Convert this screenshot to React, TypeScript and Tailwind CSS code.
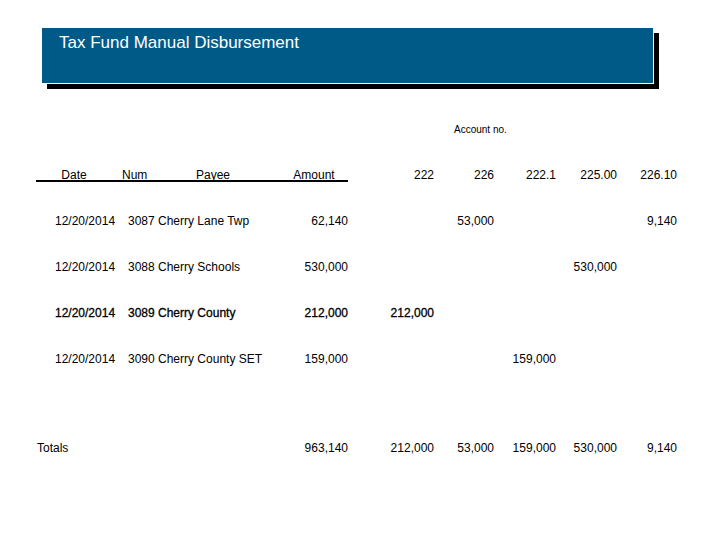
const cols = ['w-[84px]', 'w-[160px]', 'w-[68px]', 'w-[86px]', 'w-[60px]', 'w-[62px]', 'w-[61px]', 'w-[60px]']

const rows = [
  { date: '12/20/2014', payee: '3087 Cherry Lane Twp', vals: ['62,140', '', '53,000', '', '', '9,140'], bold: false },
  { date: '12/20/2014', payee: '3088 Cherry Schools', vals: ['530,000', '', '', '', '530,000', ''], bold: false },
  { date: '12/20/2014', payee: '3089 Cherry County', vals: ['212,000', '212,000', '', '', '', ''], bold: true },
  { date: '12/20/2014', payee: '3090 Cherry County SET', vals: ['159,000', '', '', '159,000', '', ''], bold: false },
]

function Row({ first, second, vals, cls }: { first: React.ReactNode; second: React.ReactNode; vals: string[]; cls?: string }) {
  return (
    <div className={'flex h-[15px] items-center ' + (cls ?? '')}>
      <div className={cols[0]}>{first}</div>
      <div className={cols[1]}>{second}</div>
      {vals.map((v, i) => (
        <div key={i} className={cols[i + 2] + ' text-right'}>{v}</div>
      ))}
    </div>
  )
}

export default function App() {
  return (
    <div className="w-[720px] h-[540px] bg-white text-black text-[12px]" style={{ fontFamily: 'Arial, "Liberation Sans", sans-serif' }}>
      <div className="pt-[28px] pl-[42px]">
        <div className="w-[612px] h-[56px] bg-[#005a87] border-b border-r border-white shadow-[5px_5px_0_#000] pl-[17px] pt-[2px]">
          <div className="text-white text-[17px]">Tax Fund Manual Disbursement</div>
        </div>
      </div>
      <div className="pl-[36px]">
        <div className="pl-[418px] pt-[38px] text-[10px]">Account no.</div>
        <div className="flex mt-[29px] h-[16px] items-center">
          <div className="flex border-b-2 border-black h-[16px] items-start">
            <div className={cols[0] + ' text-center pr-[8px]'}>Date</div>
            <div className={cols[1] + ' flex'}>
              <span className="pl-[2px] w-[60px]">Num</span>
              <span className="pl-[16px]">Payee</span>
            </div>
            <div className={cols[2] + ' text-center'}>Amount</div>
          </div>
          <div className={cols[3] + ' text-right self-start'}>222</div>
          <div className={cols[4] + ' text-right self-start'}>226</div>
          <div className={cols[5] + ' text-right self-start'}>222.1</div>
          <div className={cols[6] + ' text-right self-start'}>225.00</div>
          <div className={cols[7] + ' text-right self-start'}>226.10</div>
        </div>
        <div className="mt-[31px] flex flex-col gap-[31px]">
          {rows.map((r, i) => (
            <Row
              key={i}
              first={<span className="pl-[19px]">{r.date}</span>}
              second={<span className="pl-[8px]">{r.payee}</span>}
              vals={r.vals}
              cls={r.bold ? 'font-medium [-webkit-text-stroke:0.3px_black]' : ''}
            />
          ))}
        </div>
        <div className="mt-[74px]">
          <Row first={<span className="pl-[1px]">Totals</span>} second="" vals={['963,140', '212,000', '53,000', '159,000', '530,000', '9,140']} />
        </div>
      </div>
    </div>
  )
}
